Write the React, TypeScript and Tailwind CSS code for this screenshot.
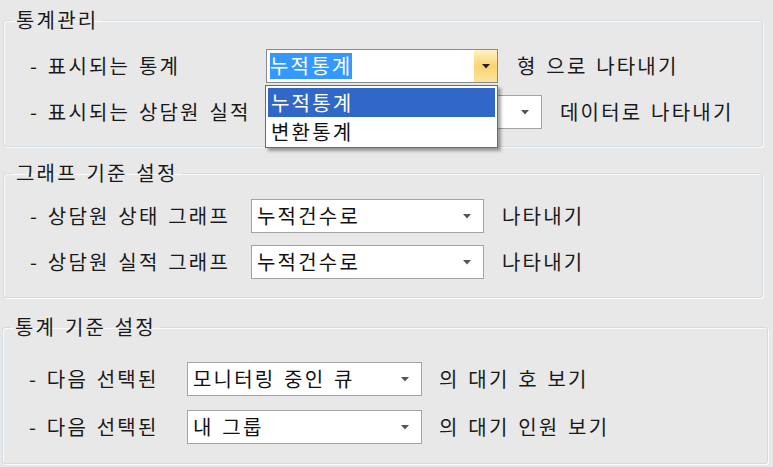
/**
 * 통계 설정 dialog - Windows style group boxes
 */

const FONT = { fontFamily: '"Noto Sans CJK KR", "Noto Sans", sans-serif' };

function Arrow() {
  return (
    <svg width="8" height="5" viewBox="0 0 8 5" className="shrink-0">
      <path d="M0 0h8L4 4.5z" fill="#555" />
    </svg>
  );
}

function Combo({ value, className }: { value: string; className: string }) {
  return (
    <div
      className={`flex items-center h-[34px] bg-white border border-[#a3a3a3] pl-[5px] pr-[12px] ${className}`}
    >
      <span className="flex-1 whitespace-nowrap text-[#111]">{value}</span>
      <Arrow />
    </div>
  );
}

function GroupBox({
  title,
  className,
  children,
}: {
  title: string;
  className: string;
  children: React.ReactNode;
}) {
  return (
    <fieldset
      className={`border border-[#d3dce3] rounded-[3px] shadow-[1px_1px_0_#fafafa,inset_1px_1px_0_#fafafa] pl-[26px] ${className}`}
    >
      <legend className="ml-[-18px] px-[4px] leading-[24px] text-[#1a1a1a]">{title}</legend>
      {children}
    </fieldset>
  );
}

export default function App() {
  return (
    <div
      className="w-[773px] h-[467px] bg-[#e8e8e8] pt-[8px] text-[20px] tracking-[2.2px] [word-spacing:2px] text-[#1a1a1a] overflow-hidden"
      style={FONT}
    >
      {/* 통계관리 */}
      <GroupBox title="통계관리" className="ml-[3px] w-[760px] h-[139px] pt-[17px]">
        <div className="flex flex-col gap-[12px]">
          <div className="flex items-center">
            <span className="w-[236px] shrink-0 whitespace-nowrap">- 표시되는 통계</span>
            <div className="relative z-10">
              {/* open combo box */}
              <div className="flex items-center w-[232px] h-[34px] bg-white border border-[#8a8a8a] pl-[3px]">
                <span className="flex-1 leading-[26px]">
                  <span className="inline-block bg-[#3399ff] text-white">누적통계</span>
                </span>
                <div className="flex items-center justify-center w-[23px] h-[32px] bg-gradient-to-b from-[#fff2c4] via-[#fbd46f] to-[#fbe39e]">
                  <svg width="8" height="5" viewBox="0 0 8 5">
                    <path d="M0 0h8L4 4.5z" fill="#222" />
                  </svg>
                </div>
              </div>
              {/* dropdown list */}
              <div className="absolute left-[-1px] top-[36px] w-[233px] h-[63px] bg-white border border-[#6b6b6b] p-[2px] shadow-[3px_3px_3px_rgba(0,0,0,0.35)]">
                <div className="h-[29px] bg-[#3168c8] text-white pl-[3px] leading-[29px]">누적통계</div>
                <div className="h-[29px] text-[#111] pl-[3px] leading-[29px]">변환통계</div>
              </div>
            </div>
            <span className="ml-[19px] whitespace-nowrap">형 으로 나타내기</span>
          </div>
          <div className="flex items-center">
            <span className="w-[236px] shrink-0 whitespace-nowrap">- 표시되는 상담원 실적</span>
            <Combo value="" className="w-[276px] h-[33px]" />
            <span className="ml-[18px] whitespace-nowrap">데이터로 나타내기</span>
          </div>
        </div>
      </GroupBox>

      {/* 그래프 기준 설정 */}
      <GroupBox title="그래프 기준 설정" className="ml-[3px] mt-[14px] w-[760px] h-[137px] pt-[14px]">
        <div className="flex flex-col gap-[12px]">
          <div className="flex items-center">
            <span className="w-[221px] shrink-0 whitespace-nowrap">- 상담원 상태 그래프</span>
            <Combo value="누적건수로" className="w-[233px]" />
            <span className="ml-[18px]">나타내기</span>
          </div>
          <div className="flex items-center">
            <span className="w-[221px] shrink-0 whitespace-nowrap">- 상담원 실적 그래프</span>
            <Combo value="누적건수로" className="w-[233px]" />
            <span className="ml-[18px]">나타내기</span>
          </div>
        </div>
      </GroupBox>

      {/* 통계 기준 설정 */}
      <GroupBox title="통계 기준 설정" className="ml-[2px] mt-[17px] w-[766px] h-[149px] pt-[23px]">
        <div className="flex flex-col gap-[14px]">
          <div className="flex items-center">
            <span className="w-[158px] shrink-0 whitespace-nowrap">- 다음 선택된</span>
            <Combo value="모니터링 중인 큐" className="w-[235px]" />
            <span className="ml-[17px] whitespace-nowrap">의 대기 호 보기</span>
          </div>
          <div className="flex items-center">
            <span className="w-[158px] shrink-0 whitespace-nowrap">- 다음 선택된</span>
            <Combo value="내 그룹" className="w-[235px]" />
            <span className="ml-[17px] whitespace-nowrap">의 대기 인원 보기</span>
          </div>
        </div>
      </GroupBox>
    </div>
  );
}
